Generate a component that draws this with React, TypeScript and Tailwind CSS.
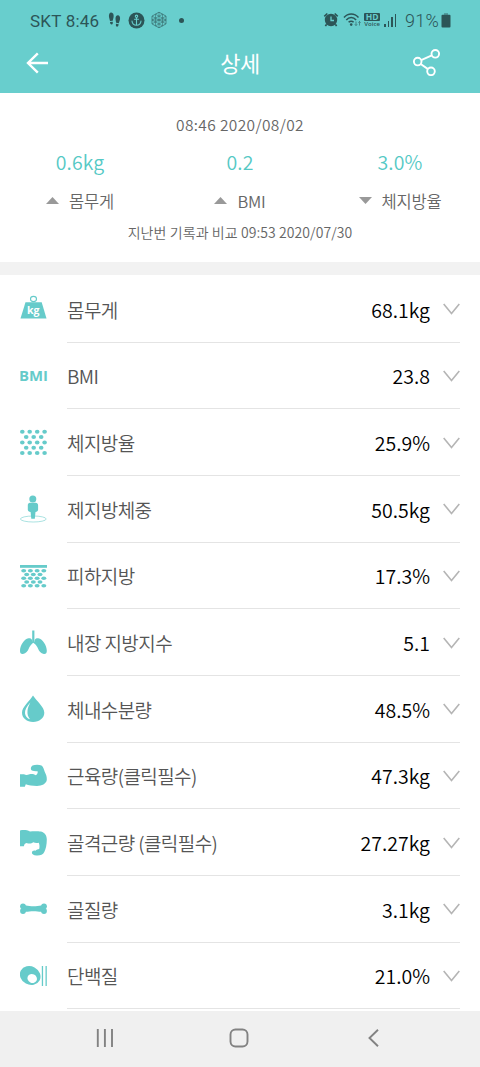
import type { ReactNode } from "react";

/* ─── Status bar ─── */

function StatusBar() {
  return (
    <div className="flex h-[40px] items-center justify-between pr-[29px] pl-[30px] text-[#2c5557]">
      <div className="flex items-center">
        <span className="mt-px w-[80px] text-[17px] leading-[20px] tracking-[0.220px] whitespace-nowrap font-['Roboto',sans-serif]">
          SKT 8:46
        </span>
        <svg className="-ml-[2px]" width="14" height="18" viewBox="0 0 14 18" fill="currentColor">
          <path d="M1 6C.6 3 1.7 1.3 3.3 1.4c1.700.1 2.700 2 2.300 4.500C5.300 7.500 5 8.500 4.700 9.700L2 10C1.800 8.500 1.200 7.300 1 6zM2 11.100l2.700-.3c.3 1.600 0 2.600-1 2.700-1 .1-1.700-.8-1.700-2.400z" />
          <path d="M12 8.500c.4-2.500-.5-4.300-2.100-4.300-1.600 0-2.500 1.600-2.400 3.800.1 1.500.5 2.700.6 3.800l2.700.5c.3-1.400 1-2.500 1.200-3.800zM8 12.800l2.700.5c-.2 1.700-.9 2.600-1.800 2.400-1-.2-1.200-1.200-.9-2.900z" />
        </svg>
        <svg className="ml-[6px]" width="17" height="17" viewBox="0 0 17 17" fill="none">
          <circle cx="8.500" cy="8.500" r="8" fill="currentColor" />
          <g stroke="#68cecd" strokeWidth="1.100" strokeLinecap="round">
            <circle cx="8.500" cy="4.300" r="1.200" />
            <path d="M8.500 5.500v7.800M6.500 7.200h4M4 9c.2 2.700 2 4.200 4.500 4.300C11 13.200 12.800 11.700 13 9" />
          </g>
        </svg>
        <svg className="ml-[5px]" width="18" height="18" viewBox="0 0 18 18" fill="none" stroke="currentColor" strokeWidth=".7" opacity=".85">
          <path d="M9 1.200l7 3.900v7.800l-7 3.900-7-3.900V5.100z" />
          <path d="M9 1.200v15.600M2 5.100l14 7.800M16 5.100L2 12.900M5.500 3.200L16 9 5.500 14.900V3.200M12.500 3.200L2 9l10.500 5.900V3.200M2 9h14" strokeWidth=".55" />
        </svg>
        <span className="ml-[11px] size-[5px] rounded-full bg-current" />
      </div>
      <div className="flex items-center">
        <svg width="16" height="16" viewBox="0 0 16 16" fill="none">
          <circle cx="8" cy="8" r="6.200" fill="currentColor" />
          <path d="M1.300 4.300l3-2.800M14.700 4.300l-3-2.800M3.600 12.300l-1.200 1.800M12.400 12.300l1.200 1.800" stroke="currentColor" strokeWidth="1.700" />
          <path d="M8 4.500v4h3" stroke="#68cecd" strokeWidth="1.300" />
        </svg>
        <svg className="ml-[4px]" width="19" height="16" viewBox="0 0 19 16" fill="none" stroke="currentColor">
          <path d="M1 5.500c4-4.700 10.500-4.700 14.500 0M3.300 8c2.800-3.200 7-3.200 9.800 0M5.600 10.300c1.500-1.500 3.600-1.500 5 0" strokeWidth="1.500" />
          <circle cx="8.200" cy="12.600" r="1.300" fill="currentColor" stroke="none" />
          <path d="M13 9.500v4M11.800 12.300l1.200 1.200 1.200-1.200M16.500 13.500v-4M15.300 10.700l1.200-1.200 1.200 1.200" strokeWidth=".6" />
        </svg>
        <div className="ml-[2px] flex w-[16px] flex-col items-center font-['Open_Sans',sans-serif]">
          <span className="flex h-[8px] w-[16px] items-center justify-center rounded-[1px] bg-[#2c5557] text-[8.500px] leading-[8px] font-bold text-[#68cecd]">
            HD
          </span>
          <span className="text-[6px] leading-[7px] font-semibold">Voice</span>
        </div>
        <div className="ml-[4px] flex h-[14px] items-end gap-[2px]">
          <span className="h-[3px] w-[1.500px] bg-current" />
          <span className="h-[6px] w-[1.500px] bg-current" />
          <span className="h-[10px] w-[1.500px] bg-current" />
          <span className="h-[13px] w-[1.500px] bg-current" />
        </div>
        <span className="mt-px ml-[9px] text-[18px] leading-[20px] tracking-[0.200px] font-['Roboto',sans-serif] font-light">91%</span>
        <svg className="ml-[2px]" width="10" height="15" viewBox="0 0 10 15" fill="currentColor">
          <path d="M3 0h4v2H3z" opacity=".4" />
          <rect x="0.500" y="1.800" width="9" height="12.600" rx="1" />
        </svg>
      </div>
    </div>
  );
}

/* ─── Title bar ─── */

function TitleBar() {
  return (
    <div className="grid h-[53px] grid-cols-[1fr_auto_1fr] items-center px-[25px] text-white">
      <svg className="-mt-[8px]" width="24" height="24" viewBox="0 0 24 24" fill="none" stroke="currentColor" strokeWidth="2.400">
        <path d="M23 12H3M12.800 2.300L3 12l9.800 9.700" />
      </svg>
      <h1 className="-mt-[9px] text-[22px] leading-[30px] tracking-[-0.5px]">상세</h1>
      <svg className="-mt-[11px] mr-[14px] justify-self-end" width="30" height="30" viewBox="0 0 30 30" fill="none" stroke="currentColor" strokeWidth="1.900">
        <circle cx="6.700" cy="15.600" r="3.800" />
        <circle cx="24.300" cy="7.800" r="3.800" />
        <circle cx="20" cy="25.300" r="3.800" />
        <path d="M10.200 14.100l10.600-4.700M9.700 18l7.300 5.100" />
      </svg>
    </div>
  );
}

/* ─── Comparison summary ─── */

type Change = {
  value: string;
  label: string;
  up: boolean;
};

const changes: Change[] = [
  { value: "0.6kg", label: "몸무게", up: true },
  { value: "0.2", label: "BMI", up: true },
  { value: "3.0%", label: "체지방율", up: false },
];

function Summary() {
  return (
    <section className="flex h-[169px] shrink-0 flex-col text-center text-[#666]">
      <p className="mt-[20px] text-[15.500px] leading-[22px] font-[350] tracking-[0.380px]">08:46 2020/08/02</p>
      <div className="mt-[13px] grid grid-cols-3">
        {changes.map((c) => (
          <div key={c.label} className="flex flex-col items-center">
            <span className="text-[19.500px] leading-[28px] font-[350] tracking-[0.100px] text-[#55c9c5]">{c.value}</span>
            <span className="mt-[13px] flex items-center text-[16.500px] leading-[24px] font-[350] tracking-[-0.2px]">
              <svg className="mr-[10px] -mt-[2px]" width="13" height="7" viewBox="0 0 13 7" fill="#999">
                <path d={c.up ? "M0 7L6.500 0L13 7z" : "M0 0L6.500 7L13 0z"} />
              </svg>
              {c.label}
            </span>
          </div>
        ))}
      </div>
      <p className="mt-[9px] text-[14px] leading-[20px] font-[350] tracking-[0.080px]">지난번 기록과 비교 09:53 2020/07/30</p>
    </section>
  );
}

/* ─── Row icons ─── */

function Icon({ children }: { children: ReactNode }) {
  return (
    <svg width="28" height="28" viewBox="0 0 28 28" fill="currentColor">
      {children}
    </svg>
  );
}

function WeightIcon() {
  return (
    <Icon>
      <ellipse cx="13.500" cy="4" rx="3" ry="2.600" fill="none" stroke="currentColor" strokeWidth="1.100" />
      <path d="M5.500 7.300h16.200L26.500 23.500H.5z" />
      <text x="13.200" y="18.500" fill="#fff" fontSize="10.500" fontWeight="700" textAnchor="middle" fontFamily="Open Sans, sans-serif">
        kg
      </text>
    </Icon>
  );
}

function BmiIcon() {
  return (
    <Icon>
      <text x="-1" y="18.600" fontSize="14" fontWeight="700" textLength="29" lengthAdjust="spacingAndGlyphs" fontFamily="Open Sans, sans-serif">
        BMI
      </text>
    </Icon>
  );
}

function FatIcon() {
  const rows = [2.700, 8, 13.400, 18.800, 24.100];
  return (
    <Icon>
      {rows.map((y, i) =>
        (i % 2 ? [6.200, 13.700, 21.200] : [2.300, 9.700, 17.200, 24.600]).map((x) => (
          <ellipse key={`${x}-${y}`} cx={x} cy={y} rx="2.300" ry="2" />
        )),
      )}
    </Icon>
  );
}

function LeanIcon() {
  return (
    <Icon>
      <ellipse cx="13.300" cy="24" rx="12.900" ry="3" fill="none" stroke="currentColor" strokeWidth=".8" opacity=".7" />
      <circle cx="12.800" cy="4" r="3.500" />
      <path d="M10 7.800h5.600c1.500 0 2.500 1 2.500 2.500v4.500c0 1.300-1.200 2-2.600 2.200l-.7 6.800h-3.500l-.7-6.800c-1.600-.2-2.800-.9-2.800-2.200v-4.500c0-1.500.8-2.500 2.200-2.500z" />
    </Icon>
  );
}

function SkinFatIcon() {
  const rows = [8.700, 12.500, 16.300, 20, 23.700];
  return (
    <Icon>
      <path d="M0 3h27v2.800H0z" />
      {rows.map((y, i) =>
        (i % 2 ? [6.700, 13.300, 20] : [3.700, 10.400, 17.100, 23.800]).map((x) => (
          <ellipse key={`${x}-${y}`} cx={x} cy={y} rx="2.500" ry="1.700" />
        )),
      )}
    </Icon>
  );
}

function LungsIcon() {
  return (
    <Icon>
      <path d="M12.200 1.500h2.200v11l2.400 1.700-1.300 1.200-2.200-1.700-2.200 1.700-1.300-1.200 2.400-1.700z" />
      <path d="M8.500 9.300c2.700-.4 4.500 1.700 3.500 4.500-.9 2.700-2.300 3.300-3.300 6-.9 2.500-2.700 4.700-5.700 5.200-2 .3-3-1-3-3.300C0 16.700 4 10.100 8.500 9.300z" />
      <path d="M18.300 9.300c-2.700-.4-4.500 1.700-3.500 4.500.9 2.700 2.300 3.300 3.300 6 .9 2.500 2.700 4.700 5.700 5.200 2 .3 3-1 3-3.300 0-5-4-11.600-8.500-12.400z" />
    </Icon>
  );
}

function DropIcon() {
  return (
    <Icon>
      <path d="M13 .5C16.500 6 24.300 11.800 24.300 17.800c0 5.300-5 9.200-11.200 9.200S2 23.100 2 17.800C2 11.800 9.800 6 13 .5z" />
      <path d="M10.300 7.500C6.500 12 4.800 15 5 18.300c.2 3 2.200 5.200 5 6-2-2.600-2.800-5-2.500-8.300.2-3 1.300-5.500 2.800-8.500z" fill="#fff" />
    </Icon>
  );
}

function ArmIcon() {
  return (
    <Icon>
      <path d="M0 12.300H4C6 13.500 7.500 13 9.500 12.300C12 11.700 14 12.300 15.800 13.300C17.300 12.300 18 11 17.600 9.200C16 9.400 13.500 9.300 11.800 8.500C10.300 7.500 10.500 4.800 12.500 3.600C15 2.600 19 2.600 21.500 3.500C23.500 5 24 7.500 24.800 10C26.200 12.500 27 15 26.800 18C26 22 22 23.700 17 24C12.500 24 8.500 23.300 5.800 22.300L4.800 24.800H0z" />
    </Icon>
  );
}

function SkeletalMuscleIcon() {
  return (
    <Icon>
      <path d="M0 1.500C3.500.8 7 1 10 2.500C13 2 18 2 21 2.600C25 3.800 26.800 6.500 26.800 10.500C26.800 16 25.800 20 24.300 23C22.800 26 20 26.700 16.500 26.500C13.500 26.400 11.800 25.300 11.900 23.600C12 22 13.500 21.300 15.500 21.700C16.500 20.700 18 20 19.200 19.900C19.800 18 19.500 15.500 18.800 13.800C16.500 14.300 14.800 14 13.300 13.300C11.500 14.800 9 14.900 6.500 14C4.800 14.300 4.300 15.600 3.900 17.200H0z" />
    </Icon>
  );
}

function BoneIcon() {
  return (
    <Icon>
      <circle cx="3" cy="11.300" r="2.900" />
      <circle cx="3" cy="16" r="2.900" />
      <circle cx="24" cy="11.300" r="2.900" />
      <circle cx="24" cy="16" r="2.900" />
      <path d="M2 10l4 .5c4 .9 11 .9 15 0L25 10v7.300l-4-.5c-4-.9-11-.9-15 0l-4 .5z" />
    </Icon>
  );
}

function ProteinIcon() {
  return (
    <Icon>
      <ellipse cx="10.200" cy="13.500" rx="10.600" ry="9.200" transform="rotate(28 10.200 13.500)" />
      <ellipse cx="12.200" cy="16.500" rx="4.900" ry="4.300" fill="#fff" transform="rotate(25 12.200 16.500)" />
      <path d="M21.800 4h1.300v20h-1.300zM25.500 4h1.300v20h-1.300z" />
    </Icon>
  );
}

/* ─── Measurement list ─── */

type Measurement = {
  icon: ReactNode;
  label: string;
  value: string;
};

const measurements: Measurement[] = [
  { icon: <WeightIcon />, label: "몸무게", value: "68.1kg" },
  { icon: <BmiIcon />, label: "BMI", value: "23.8" },
  { icon: <FatIcon />, label: "체지방율", value: "25.9%" },
  { icon: <LeanIcon />, label: "제지방체중", value: "50.5kg" },
  { icon: <SkinFatIcon />, label: "피하지방", value: "17.3%" },
  { icon: <LungsIcon />, label: "내장 지방지수", value: "5.1" },
  { icon: <DropIcon />, label: "체내수분량", value: "48.5%" },
  { icon: <ArmIcon />, label: "근육량(클릭필수)", value: "47.3kg" },
  { icon: <SkeletalMuscleIcon />, label: "골격근량 (클릭필수)", value: "27.27kg" },
  { icon: <BoneIcon />, label: "골질량", value: "3.1kg" },
  { icon: <ProteinIcon />, label: "단백질", value: "21.0%" },
];

function MeasurementRow({ icon, label, value }: Measurement) {
  return (
    <li className="flex h-[66.670px] shrink-0 items-stretch px-[20px]">
      <div className="flex w-[47px] items-center text-[#66cbca]">{icon}</div>
      <div className="flex flex-1 items-center border-b border-[#e4e4e4]">
        <span className="mt-[2px] text-[19px] leading-[28px] font-[350] tracking-[-0.580px] text-[#555]">{label}</span>
        <span className="mt-[2px] ml-auto text-[19.500px] leading-[28px] font-[350] tracking-[0.020px] text-black">{value}</span>
        <svg className="mt-px ml-[13px]" width="17" height="12" viewBox="0 0 17 12" fill="none" stroke="#b5b5b5" strokeWidth="1.600">
          <path d="M.7 1l7.800 9.500L16.300 1" />
        </svg>
      </div>
    </li>
  );
}

/* ─── Navigation bar ─── */

function NavBar() {
  return (
    <nav className="flex h-[56px] shrink-0 items-center bg-[#f0f0f0] text-[#828282]">
      <svg className="-mt-[2px] ml-[96px]" width="18" height="18" viewBox="0 0 18 18" fill="none" stroke="currentColor" strokeWidth="1.900">
        <path d="M1.800 0v18M8.900 0v18M16 0v18" />
      </svg>
      <svg className="-mt-[2px] ml-[115px]" width="20" height="20" viewBox="0 0 20 20" fill="none" stroke="currentColor" strokeWidth="1.900">
        <rect x="1.500" y="1.500" width="17" height="17" rx="5" />
      </svg>
      <svg className="-mt-[2px] ml-[118px]" width="13" height="18" viewBox="0 0 13 18" fill="none" stroke="currentColor" strokeWidth="1.900">
        <path d="M11 .8L2.500 9l8.500 8.200" />
      </svg>
    </nav>
  );
}

export default function App() {
  return (
    <div className="flex h-[1067px] w-[480px] flex-col overflow-hidden bg-white font-['Noto_Sans_CJK_KR',sans-serif]">
      <header className="h-[93px] shrink-0 bg-[#68cecd]">
        <StatusBar />
        <TitleBar />
      </header>
      <Summary />
      <div className="h-[13px] shrink-0 bg-[#f2f2f2]" />
      <ul className="flex min-h-0 flex-1 flex-col overflow-hidden pt-px">
        {measurements.map((m) => (
          <MeasurementRow key={m.label} {...m} />
        ))}
      </ul>
      <NavBar />
    </div>
  );
}
